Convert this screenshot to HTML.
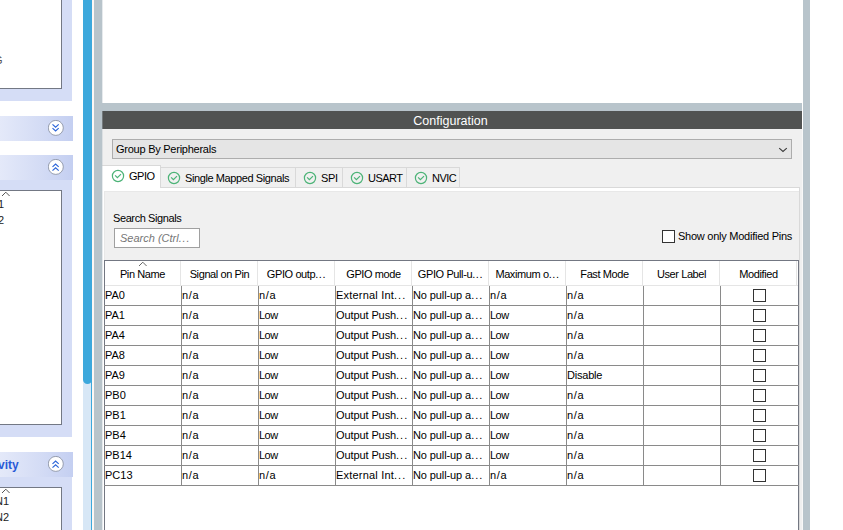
<!DOCTYPE html>
<html><head><meta charset="utf-8"><style>
*{box-sizing:border-box;margin:0;padding:0}
html,body{width:843px;height:530px;overflow:hidden;background:#fff;font-family:"Liberation Sans",sans-serif;position:relative}
.a{position:absolute}
.lav{background:#d5ddf6}
.lbox{background:#fff;border:1px solid #737884}
.hbar{background:linear-gradient(90deg,#e4e9f9 0%,#d4dcf5 55%,#c4cff1 100%)}
.t11{position:absolute;font-size:11px;color:#000;white-space:nowrap;line-height:13px}
.cell{position:absolute;font-size:11px;line-height:13px;white-space:nowrap;letter-spacing:-0.15px;color:#000}
</style></head><body>
<div class="a lav" style="left:0;top:0;width:72px;height:101px"></div>
<div class="a lbox" style="left:-2px;top:-2px;width:64px;height:91px"></div>
<div class="a t11" style="left:-6px;top:54px;color:#555">G</div>
<div class="a hbar" style="left:0;top:116px;width:73px;height:25px"></div>
<svg class="a" style="left:48px;top:120px" width="17" height="17"><circle cx="7.8" cy="7.9" r="7.5" fill="#fff" stroke="#8c94a6" stroke-width="0.9"/><path d="M4.5 4.3 L7.6 7.2 L10.7 4.3 M4.5 8.1 L7.6 11.0 L10.7 8.1" fill="none" stroke="#2d66d9" stroke-width="1.15"/></svg>
<div class="a hbar" style="left:0;top:155px;width:73px;height:25px"></div>
<svg class="a" style="left:48px;top:159px" width="17" height="17"><circle cx="7.8" cy="7.9" r="7.5" fill="#fff" stroke="#8c94a6" stroke-width="0.9"/><path d="M4.5 7.9 L7.6 5.0 L10.7 7.9 M4.5 11.7 L7.6 8.8 L10.7 11.7" fill="none" stroke="#2d66d9" stroke-width="1.15"/></svg>
<div class="a lav" style="left:0;top:180px;width:72px;height:257px"></div>
<div class="a lbox" style="left:-2px;top:190px;width:64px;height:235px"></div>
<svg class="a" style="left:1px;top:191px" width="10" height="7"><path d="M1 5 L4.8 1.2 L8.6 5" fill="none" stroke="#555" stroke-width="1"/></svg>
<div class="a t11" style="left:-2px;top:198px;color:#222">1</div>
<div class="a t11" style="left:-2px;top:214px;color:#222">2</div>
<div class="a hbar" style="left:0;top:452px;width:73px;height:25px"></div>
<div class="a" style="left:-2px;top:458px;font-size:12px;line-height:14px;font-weight:bold;color:#2a5bd7;white-space:nowrap">vity</div>
<svg class="a" style="left:48px;top:456px" width="17" height="17"><circle cx="7.8" cy="7.9" r="7.5" fill="#fff" stroke="#8c94a6" stroke-width="0.9"/><path d="M4.5 7.9 L7.6 5.0 L10.7 7.9 M4.5 11.7 L7.6 8.8 L10.7 11.7" fill="none" stroke="#2d66d9" stroke-width="1.15"/></svg>
<div class="a lav" style="left:0;top:477px;width:72px;height:60px"></div>
<div class="a lbox" style="left:-2px;top:487px;width:64px;height:60px"></div>
<svg class="a" style="left:1px;top:488px" width="10" height="7"><path d="M1 5 L4.8 1.2 L8.6 5" fill="none" stroke="#555" stroke-width="1"/></svg>
<div class="a t11" style="left:-5px;top:495px;color:#222">N1</div>
<div class="a t11" style="left:-5px;top:511px;color:#222">N2</div>
<div class="a" style="left:83px;top:0;width:9px;height:530px;background:#d7e7f6;border-right:1px solid #3ca8dc"></div>
<div class="a" style="left:83px;top:-10px;width:9px;height:394px;background:#3ca8dc;border-radius:0 0 4.5px 4.5px"></div>
<div class="a" style="left:92px;top:0;width:2px;height:530px;background:#fdf7f4"></div>
<div class="a" style="left:94px;top:0;width:8px;height:530px;background:#b8c4cb"></div>
<div class="a" style="left:803px;top:0;width:7px;height:530px;background:#b8c4cb"></div>
<div class="a" style="left:102px;top:103px;width:700px;height:8px;background:#b8c4cb"></div>
<div class="a" style="left:102px;top:111px;width:700px;height:18px;background:#515352"></div>
<div class="a" style="left:100.5px;top:113.5px;width:700px;text-align:center;color:#fff;font-size:12.5px;line-height:14px">Configuration</div>
<div class="a" style="left:102px;top:129px;width:700px;height:401px;background:#f0f0f0"></div>
<div class="a" style="left:802px;top:129px;width:1px;height:401px;background:#f8f8f8"></div>
<div class="a" style="left:112px;top:139px;width:680px;height:20px;background:#e5e5e5;border:1px solid #adadad"></div>
<div class="a t11" style="left:116px;top:143px;letter-spacing:-0.25px">Group By Peripherals</div>
<svg class="a" style="left:777px;top:144px" width="12" height="10"><path d="M2.2 4.1 L6 7.4 L9.8 4.1" fill="none" stroke="#3a3a3a" stroke-width="1.1"/></svg>
<div class="a" style="left:102px;top:187px;width:698px;height:343px;background:#fff;border-right:1px solid #d9d9d9;border-top:1px solid #d9d9d9"></div>
<div class="a" style="left:104px;top:191px;width:695px;height:339px;background:#f0f0f0;border-left:1px solid #e8e8e8;border-top:1px solid #e8e8e8"></div>
<div class="a" style="left:160px;top:167px;width:136px;height:21px;background:#f0f0f0;border:1px solid #d9d9d9"></div>
<div class="a" style="left:295px;top:167px;width:48px;height:21px;background:#f0f0f0;border:1px solid #d9d9d9"></div>
<div class="a" style="left:342px;top:167px;width:65px;height:21px;background:#f0f0f0;border:1px solid #d9d9d9"></div>
<div class="a" style="left:406px;top:167px;width:54px;height:21px;background:#f0f0f0;border:1px solid #d9d9d9"></div>
<div class="a" style="left:102px;top:165px;width:59px;height:23px;background:#fff;border-top:1px solid #d9d9d9;border-right:1px solid #d9d9d9"></div>
<svg class="a" style="left:111px;top:169px" width="14" height="14"><circle cx="7" cy="7" r="5.6" fill="none" stroke="#4cb377" stroke-width="1.2"/><path d="M4.1 6.3 L6.4 8.7 L10 5.1" fill="none" stroke="#4cb377" stroke-width="1.2"/></svg>
<div class="a t11" style="left:129px;top:170px;letter-spacing:-0.5px">GPIO</div>
<svg class="a" style="left:167px;top:171px" width="14" height="14"><circle cx="7" cy="7" r="5.6" fill="none" stroke="#4cb377" stroke-width="1.2"/><path d="M4.1 6.3 L6.4 8.7 L10 5.1" fill="none" stroke="#4cb377" stroke-width="1.2"/></svg>
<div class="a t11" style="left:185px;top:172px;letter-spacing:-0.4px">Single Mapped Signals</div>
<svg class="a" style="left:303px;top:171px" width="14" height="14"><circle cx="7" cy="7" r="5.6" fill="none" stroke="#4cb377" stroke-width="1.2"/><path d="M4.1 6.3 L6.4 8.7 L10 5.1" fill="none" stroke="#4cb377" stroke-width="1.2"/></svg>
<div class="a t11" style="left:321px;top:172px;letter-spacing:-0.3px">SPI</div>
<svg class="a" style="left:350px;top:171px" width="14" height="14"><circle cx="7" cy="7" r="5.6" fill="none" stroke="#4cb377" stroke-width="1.2"/><path d="M4.1 6.3 L6.4 8.7 L10 5.1" fill="none" stroke="#4cb377" stroke-width="1.2"/></svg>
<div class="a t11" style="left:368px;top:172px;letter-spacing:-0.5px">USART</div>
<svg class="a" style="left:414px;top:171px" width="14" height="14"><circle cx="7" cy="7" r="5.6" fill="none" stroke="#4cb377" stroke-width="1.2"/><path d="M4.1 6.3 L6.4 8.7 L10 5.1" fill="none" stroke="#4cb377" stroke-width="1.2"/></svg>
<div class="a t11" style="left:432px;top:172px;letter-spacing:-0.5px">NVIC</div>
<div class="a t11" style="left:113px;top:212px;letter-spacing:-0.4px">Search Signals</div>
<div class="a" style="left:114px;top:228px;width:86px;height:20px;background:#fff;border:1px solid #a0a0a0"></div>
<div class="a t11" style="left:120px;top:232px;font-style:italic;color:#767676;letter-spacing:0px">Search (Ctrl<span style="letter-spacing:0.8px">...</span></div>
<div class="a" style="left:662px;top:230px;width:13px;height:13px;background:#fff;border:1px solid #333"></div>
<div class="a t11" style="left:678px;top:230px;letter-spacing:-0.25px">Show only Modified Pins</div>
<div class="a" style="left:104px;top:260px;width:695px;height:280px;background:#fff;border:1px solid #737782"></div>
<div class="a" style="left:796px;top:261px;width:1px;height:24px;background:#e5e5e5"></div>
<div class="a t11" style="left:104px;top:268px;width:77px;text-align:center;letter-spacing:-0.4px">Pin Name</div>
<div class="a t11" style="left:181px;top:268px;width:77px;text-align:center;letter-spacing:-0.4px">Signal on Pin</div>
<div class="a t11" style="left:258px;top:268px;width:77px;text-align:center;letter-spacing:-0.4px">GPIO outp<span style='letter-spacing:0.6px'>...</span></div>
<div class="a t11" style="left:335px;top:268px;width:77px;text-align:center;letter-spacing:-0.4px">GPIO mode</div>
<div class="a t11" style="left:412px;top:268px;width:77px;text-align:center;letter-spacing:-0.4px">GPIO Pull-u<span style='letter-spacing:0.6px'>...</span></div>
<div class="a t11" style="left:489px;top:268px;width:77px;text-align:center;letter-spacing:-0.4px">Maximum o<span style='letter-spacing:0.6px'>...</span></div>
<div class="a t11" style="left:566px;top:268px;width:77px;text-align:center;letter-spacing:-0.4px">Fast Mode</div>
<div class="a t11" style="left:643px;top:268px;width:77px;text-align:center;letter-spacing:-0.4px">User Label</div>
<div class="a t11" style="left:720px;top:268px;width:77px;text-align:center;letter-spacing:-0.4px">Modified</div>
<div class="a" style="left:180px;top:261px;width:1px;height:24px;background:#e5e5e5"></div>
<div class="a" style="left:257px;top:261px;width:1px;height:24px;background:#e5e5e5"></div>
<div class="a" style="left:334px;top:261px;width:1px;height:24px;background:#e5e5e5"></div>
<div class="a" style="left:411px;top:261px;width:1px;height:24px;background:#e5e5e5"></div>
<div class="a" style="left:488px;top:261px;width:1px;height:24px;background:#e5e5e5"></div>
<div class="a" style="left:565px;top:261px;width:1px;height:24px;background:#e5e5e5"></div>
<div class="a" style="left:642px;top:261px;width:1px;height:24px;background:#e5e5e5"></div>
<div class="a" style="left:719px;top:261px;width:1px;height:24px;background:#e5e5e5"></div>
<div class="a" style="left:105px;top:285px;width:693px;height:1px;background:#e5e5e5"></div>
<svg class="a" style="left:138px;top:261px" width="10" height="7"><path d="M1 5 L4.8 1.2 L8.6 5" fill="none" stroke="#666" stroke-width="1"/></svg>
<div class="a" style="left:104px;top:305px;width:695px;height:1px;background:#8a8a8a"></div>
<div class="cell" style="left:105px;top:289px;letter-spacing:0px">PA0</div>
<div class="cell" style="left:182px;top:289px;letter-spacing:0.7px">n/a</div>
<div class="cell" style="left:259px;top:289px;letter-spacing:0.7px">n/a</div>
<div class="cell" style="left:336px;top:289px;letter-spacing:0.2px">External Int<span style='letter-spacing:1px'>...</span></div>
<div class="cell" style="left:413px;top:289px;letter-spacing:-0.1px">No pull-up a<span style='letter-spacing:1px'>...</span></div>
<div class="cell" style="left:490px;top:289px;letter-spacing:0.7px">n/a</div>
<div class="cell" style="left:567px;top:289px;letter-spacing:0.7px">n/a</div>
<div class="a" style="left:753px;top:289px;width:13px;height:13px;border:1px solid #333;background:#fff"></div>
<div class="a" style="left:104px;top:325px;width:695px;height:1px;background:#8a8a8a"></div>
<div class="cell" style="left:105px;top:309px;letter-spacing:0px">PA1</div>
<div class="cell" style="left:182px;top:309px;letter-spacing:0.7px">n/a</div>
<div class="cell" style="left:259px;top:309px;letter-spacing:-0.5px">Low</div>
<div class="cell" style="left:336px;top:309px;letter-spacing:-0.1px">Output Push<span style='letter-spacing:1px'>...</span></div>
<div class="cell" style="left:413px;top:309px;letter-spacing:-0.1px">No pull-up a<span style='letter-spacing:1px'>...</span></div>
<div class="cell" style="left:490px;top:309px;letter-spacing:-0.5px">Low</div>
<div class="cell" style="left:567px;top:309px;letter-spacing:0.7px">n/a</div>
<div class="a" style="left:753px;top:309px;width:13px;height:13px;border:1px solid #333;background:#fff"></div>
<div class="a" style="left:104px;top:345px;width:695px;height:1px;background:#8a8a8a"></div>
<div class="cell" style="left:105px;top:329px;letter-spacing:0px">PA4</div>
<div class="cell" style="left:182px;top:329px;letter-spacing:0.7px">n/a</div>
<div class="cell" style="left:259px;top:329px;letter-spacing:-0.5px">Low</div>
<div class="cell" style="left:336px;top:329px;letter-spacing:-0.1px">Output Push<span style='letter-spacing:1px'>...</span></div>
<div class="cell" style="left:413px;top:329px;letter-spacing:-0.1px">No pull-up a<span style='letter-spacing:1px'>...</span></div>
<div class="cell" style="left:490px;top:329px;letter-spacing:-0.5px">Low</div>
<div class="cell" style="left:567px;top:329px;letter-spacing:0.7px">n/a</div>
<div class="a" style="left:753px;top:329px;width:13px;height:13px;border:1px solid #333;background:#fff"></div>
<div class="a" style="left:104px;top:365px;width:695px;height:1px;background:#8a8a8a"></div>
<div class="cell" style="left:105px;top:349px;letter-spacing:0px">PA8</div>
<div class="cell" style="left:182px;top:349px;letter-spacing:0.7px">n/a</div>
<div class="cell" style="left:259px;top:349px;letter-spacing:-0.5px">Low</div>
<div class="cell" style="left:336px;top:349px;letter-spacing:-0.1px">Output Push<span style='letter-spacing:1px'>...</span></div>
<div class="cell" style="left:413px;top:349px;letter-spacing:-0.1px">No pull-up a<span style='letter-spacing:1px'>...</span></div>
<div class="cell" style="left:490px;top:349px;letter-spacing:-0.5px">Low</div>
<div class="cell" style="left:567px;top:349px;letter-spacing:0.7px">n/a</div>
<div class="a" style="left:753px;top:349px;width:13px;height:13px;border:1px solid #333;background:#fff"></div>
<div class="a" style="left:104px;top:385px;width:695px;height:1px;background:#8a8a8a"></div>
<div class="cell" style="left:105px;top:369px;letter-spacing:0px">PA9</div>
<div class="cell" style="left:182px;top:369px;letter-spacing:0.7px">n/a</div>
<div class="cell" style="left:259px;top:369px;letter-spacing:-0.5px">Low</div>
<div class="cell" style="left:336px;top:369px;letter-spacing:-0.1px">Output Push<span style='letter-spacing:1px'>...</span></div>
<div class="cell" style="left:413px;top:369px;letter-spacing:-0.1px">No pull-up a<span style='letter-spacing:1px'>...</span></div>
<div class="cell" style="left:490px;top:369px;letter-spacing:-0.5px">Low</div>
<div class="cell" style="left:567px;top:369px;letter-spacing:-0.2px">Disable</div>
<div class="a" style="left:753px;top:369px;width:13px;height:13px;border:1px solid #333;background:#fff"></div>
<div class="a" style="left:104px;top:405px;width:695px;height:1px;background:#8a8a8a"></div>
<div class="cell" style="left:105px;top:389px;letter-spacing:0px">PB0</div>
<div class="cell" style="left:182px;top:389px;letter-spacing:0.7px">n/a</div>
<div class="cell" style="left:259px;top:389px;letter-spacing:-0.5px">Low</div>
<div class="cell" style="left:336px;top:389px;letter-spacing:-0.1px">Output Push<span style='letter-spacing:1px'>...</span></div>
<div class="cell" style="left:413px;top:389px;letter-spacing:-0.1px">No pull-up a<span style='letter-spacing:1px'>...</span></div>
<div class="cell" style="left:490px;top:389px;letter-spacing:-0.5px">Low</div>
<div class="cell" style="left:567px;top:389px;letter-spacing:0.7px">n/a</div>
<div class="a" style="left:753px;top:389px;width:13px;height:13px;border:1px solid #333;background:#fff"></div>
<div class="a" style="left:104px;top:425px;width:695px;height:1px;background:#8a8a8a"></div>
<div class="cell" style="left:105px;top:409px;letter-spacing:0px">PB1</div>
<div class="cell" style="left:182px;top:409px;letter-spacing:0.7px">n/a</div>
<div class="cell" style="left:259px;top:409px;letter-spacing:-0.5px">Low</div>
<div class="cell" style="left:336px;top:409px;letter-spacing:-0.1px">Output Push<span style='letter-spacing:1px'>...</span></div>
<div class="cell" style="left:413px;top:409px;letter-spacing:-0.1px">No pull-up a<span style='letter-spacing:1px'>...</span></div>
<div class="cell" style="left:490px;top:409px;letter-spacing:-0.5px">Low</div>
<div class="cell" style="left:567px;top:409px;letter-spacing:0.7px">n/a</div>
<div class="a" style="left:753px;top:409px;width:13px;height:13px;border:1px solid #333;background:#fff"></div>
<div class="a" style="left:104px;top:445px;width:695px;height:1px;background:#8a8a8a"></div>
<div class="cell" style="left:105px;top:429px;letter-spacing:0px">PB4</div>
<div class="cell" style="left:182px;top:429px;letter-spacing:0.7px">n/a</div>
<div class="cell" style="left:259px;top:429px;letter-spacing:-0.5px">Low</div>
<div class="cell" style="left:336px;top:429px;letter-spacing:-0.1px">Output Push<span style='letter-spacing:1px'>...</span></div>
<div class="cell" style="left:413px;top:429px;letter-spacing:-0.1px">No pull-up a<span style='letter-spacing:1px'>...</span></div>
<div class="cell" style="left:490px;top:429px;letter-spacing:-0.5px">Low</div>
<div class="cell" style="left:567px;top:429px;letter-spacing:0.7px">n/a</div>
<div class="a" style="left:753px;top:429px;width:13px;height:13px;border:1px solid #333;background:#fff"></div>
<div class="a" style="left:104px;top:465px;width:695px;height:1px;background:#8a8a8a"></div>
<div class="cell" style="left:105px;top:449px;letter-spacing:0px">PB14</div>
<div class="cell" style="left:182px;top:449px;letter-spacing:0.7px">n/a</div>
<div class="cell" style="left:259px;top:449px;letter-spacing:-0.5px">Low</div>
<div class="cell" style="left:336px;top:449px;letter-spacing:-0.1px">Output Push<span style='letter-spacing:1px'>...</span></div>
<div class="cell" style="left:413px;top:449px;letter-spacing:-0.1px">No pull-up a<span style='letter-spacing:1px'>...</span></div>
<div class="cell" style="left:490px;top:449px;letter-spacing:-0.5px">Low</div>
<div class="cell" style="left:567px;top:449px;letter-spacing:0.7px">n/a</div>
<div class="a" style="left:753px;top:449px;width:13px;height:13px;border:1px solid #333;background:#fff"></div>
<div class="a" style="left:104px;top:485px;width:695px;height:1px;background:#8a8a8a"></div>
<div class="cell" style="left:105px;top:469px;letter-spacing:0px">PC13</div>
<div class="cell" style="left:182px;top:469px;letter-spacing:0.7px">n/a</div>
<div class="cell" style="left:259px;top:469px;letter-spacing:0.7px">n/a</div>
<div class="cell" style="left:336px;top:469px;letter-spacing:0.2px">External Int<span style='letter-spacing:1px'>...</span></div>
<div class="cell" style="left:413px;top:469px;letter-spacing:-0.1px">No pull-up a<span style='letter-spacing:1px'>...</span></div>
<div class="cell" style="left:490px;top:469px;letter-spacing:0.7px">n/a</div>
<div class="cell" style="left:567px;top:469px;letter-spacing:0.7px">n/a</div>
<div class="a" style="left:753px;top:469px;width:13px;height:13px;border:1px solid #333;background:#fff"></div>
<div class="a" style="left:181px;top:286px;width:1px;height:200px;background:#8a8a8a"></div>
<div class="a" style="left:258px;top:286px;width:1px;height:200px;background:#8a8a8a"></div>
<div class="a" style="left:335px;top:286px;width:1px;height:200px;background:#8a8a8a"></div>
<div class="a" style="left:412px;top:286px;width:1px;height:200px;background:#8a8a8a"></div>
<div class="a" style="left:489px;top:286px;width:1px;height:200px;background:#8a8a8a"></div>
<div class="a" style="left:566px;top:286px;width:1px;height:200px;background:#8a8a8a"></div>
<div class="a" style="left:643px;top:286px;width:1px;height:200px;background:#8a8a8a"></div>
<div class="a" style="left:720px;top:286px;width:1px;height:200px;background:#8a8a8a"></div>
<div class="a" style="left:102px;top:0;width:1px;height:530px;background:rgba(184,196,203,0.35)"></div>
</body></html>
